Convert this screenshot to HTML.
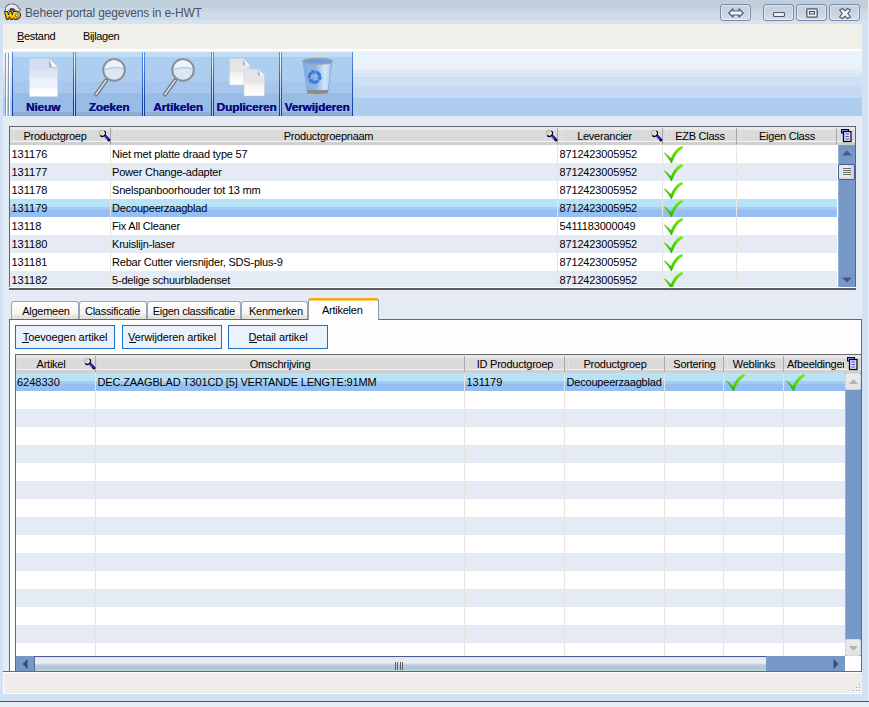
<!DOCTYPE html><html><head><meta charset="utf-8"><style>html,body{margin:0;padding:0}body{width:869px;height:707px;position:relative;overflow:hidden;background:#d3e2f2;font-family:"Liberation Sans",sans-serif}div{box-sizing:border-box}svg{position:absolute;overflow:visible}</style></head><body>
<div style="position:absolute;left:0px;top:0px;width:869px;height:24px;background:linear-gradient(#c1cedc 0,#c1cedc 8px,#c8d5e2 8px,#c8d5e2 12px,#cfdce8 12px,#cfdce8 20px,#d3e3f2 20px)"></div>
<div style="position:absolute;left:868px;top:0px;width:1px;height:707px;background:#e6edf5"></div>
<div style="position:absolute;left:0px;top:701px;width:869px;height:1px;background:#555"></div>
<div style="position:absolute;left:0px;top:702px;width:869px;height:5px;background:#e8eef7"></div>
<svg style="left:0px;top:0px" width="24" height="24" viewBox="0 0 24 24">
<defs><linearGradient id="wo" x1="0" y1="0" x2="0" y2="1"><stop offset="0" stop-color="#fff030"/><stop offset="0.6" stop-color="#f4c000"/><stop offset="1" stop-color="#e08000"/></linearGradient></defs>
<path d="M6,6 L8,5.5 L8.5,4 L10.5,4.5 L11.5,3.5 L13,4.5 L15,4 L16,5.5 L18,6 L18,8 L20.5,9 L20,11 L17,11.5 L15,9.5 L12,8.5 L9,10 L7,12 L5,11 L5.5,8.5 Z" fill="#e8eaec" stroke="#505050" stroke-width="0.8"/>
<path d="M10,8.2 Q13,7.5 15.5,10 L13.5,11.5 Q12,10.5 10,11 Z" fill="#4a4c50"/>
<path d="M4.5,11.5 L7.5,11.5 L8.5,15 L9.5,11.5 L11.5,11.5 L12.3,15 L13.2,11.5 L14,11.5 Q18,11 20.5,13.5 Q21.5,17 18.5,19 Q15,20.5 13,18.5 L12.5,19.5 L10.5,19.5 L9.5,16.8 L8.5,19.5 L6.5,19.5 Z" fill="url(#wo)" stroke="#2a2000" stroke-width="1"/>
<ellipse cx="16.8" cy="15.5" rx="1.3" ry="1.8" fill="#d8e8f4" stroke="#302800" stroke-width="0.6"/>
</svg>
<div style="position:absolute;left:25px;top:3.03px;font:normal 12px/20px 'Liberation Sans', sans-serif;color:#4a5262;letter-spacing:-0.15px;white-space:nowrap;">Beheer portal gegevens in e-HWT</div>
<div style="position:absolute;left:720px;top:4px;width:31px;height:17px;border:1px solid #7d8aa6;border-radius:3px;background:linear-gradient(#c4d0dd,#c7d3e0 50%,#d3dfeb);box-shadow:inset 0 0 0 1px rgba(255,255,255,0.45)"><svg style="left:7px;top:3px" width="16" height="10" viewBox="0 0 16 10"><path d="M0.8,5 L5,0.8 L5,3 L11,3 L11,0.8 L15.2,5 L11,9.2 L11,7 L5,7 L5,9.2 Z" fill="#f4f4f4" stroke="#4e5668" stroke-width="1.2" stroke-linejoin="round"/></svg></div>
<div style="position:absolute;left:763px;top:4px;width:31px;height:17px;border:1px solid #7d8aa6;border-radius:3px;background:linear-gradient(#c4d0dd,#c7d3e0 50%,#d3dfeb);box-shadow:inset 0 0 0 1px rgba(255,255,255,0.45)"><svg style="left:9px;top:7px" width="12" height="5" viewBox="0 0 12 5"><rect x="0.5" y="0.5" width="11" height="4" rx="1" fill="#eeeeee" stroke="#4e5668" stroke-width="1.1"/></svg></div>
<div style="position:absolute;left:796px;top:4px;width:31px;height:17px;border:1px solid #7d8aa6;border-radius:3px;background:linear-gradient(#c4d0dd,#c7d3e0 50%,#d3dfeb);box-shadow:inset 0 0 0 1px rgba(255,255,255,0.45)"><svg style="left:9px;top:3px" width="12" height="10" viewBox="0 0 12 10"><rect x="0.8" y="0.8" width="10.4" height="8.4" rx="1" fill="#eeeeee" stroke="#4e5668" stroke-width="1.3"/><rect x="3.5" y="3.5" width="5" height="2.5" fill="none" stroke="#4e5668" stroke-width="1.1"/></svg></div>
<div style="position:absolute;left:829px;top:4px;width:31px;height:17px;border:1px solid #7d8aa6;border-radius:3px;background:linear-gradient(#c4d0dd,#c7d3e0 50%,#d3dfeb);box-shadow:inset 0 0 0 1px rgba(255,255,255,0.45)"><svg style="left:9px;top:3px" width="12" height="11" viewBox="0 0 12 11"><path d="M0.6,2 L3.4,0.4 L6,2.8 L8.6,0.4 L11.4,2 L8.8,5.5 L11.4,9 L8.6,10.6 L6,8.2 L3.4,10.6 L0.6,9 L3.2,5.5 Z" fill="#f4f4f4" stroke="#4e5668" stroke-width="1.2" stroke-linejoin="round"/></svg></div>
<div style="position:absolute;left:3px;top:24px;width:859px;height:25px;background:#f0efea"></div>
<div style="position:absolute;left:3px;top:49px;width:859px;height:2px;background:#ffffff"></div>
<div style="position:absolute;left:17px;top:25.86px;font:normal 11px/20px 'Liberation Sans', sans-serif;color:#000000;letter-spacing:-0.3px;white-space:nowrap;">Bestand</div>
<div style="position:absolute;left:17px;top:41px;width:7px;height:1px;background:#000000"></div>
<div style="position:absolute;left:83px;top:25.86px;font:normal 11px/20px 'Liberation Sans', sans-serif;color:#000000;letter-spacing:-0.35px;white-space:nowrap;">Bijlagen</div>
<div style="position:absolute;left:3px;top:51px;width:859px;height:66px;background:linear-gradient(#eaf2fc 0,#eaf2fc 18px,#e3eaf3 18px,#e3eaf3 22px,#d9e7f5 22px,#d9e7f5 26px,#cfdff4 26px,#cfdff4 36px,#c5daf2 36px,#c5daf2 47px,#aecef0 47px,#aecef0 65px,#e0e8f2 65px)"></div>
<div style="position:absolute;left:5px;top:53px;width:1px;height:62px;background:#9098a8"></div>
<div style="position:absolute;left:8px;top:53px;width:1px;height:62px;background:#9098a8"></div>
<div style="position:absolute;left:6px;top:53px;width:1px;height:62px;background:#ffffff"></div>
<div style="position:absolute;left:9px;top:53px;width:1px;height:62px;background:#ffffff"></div>
<div style="position:absolute;left:12px;top:52px;width:62px;height:64px;border-left:1px solid transparent;border-right:1px solid transparent;background:linear-gradient(#c6daf2 0,#c6daf2 4px,#b6e0f6 4px,#b6e0f6 5px,#adcdf1 5px,#adcdf1 29px,#a6c6ee 29px,#a6c6ee 41px,#99bce7 41px,#99bce7 60px,#8eaed6 60px,#8eaed6 63px,#78a8dc 63px)"><svg style="left:16px;top:6px" width="30" height="40" viewBox="0 0 30 40"><defs><linearGradient id="pg" x1="0" y1="0" x2="0" y2="1"><stop offset="0" stop-color="#d2ddf0"/><stop offset="0.3" stop-color="#d6e0f2"/><stop offset="0.32" stop-color="#dee7f5"/><stop offset="0.5" stop-color="#e0e9f6"/><stop offset="0.52" stop-color="#eaf1fb"/><stop offset="0.76" stop-color="#edf3fb"/><stop offset="0.78" stop-color="#fbfcfe"/><stop offset="1" stop-color="#ffffff"/></linearGradient></defs><path d="M0.5,0.5 L20,0.5 L28.5,9 L28.5,38.5 L0.5,38.5 Z" fill="url(#pg)"/><path d="M20,0.5 L28.5,9 L20,9 Z" fill="#f6f8fa"/><path d="M20,0.5 L20,9 L23,9 Z" fill="#a8b0bc"/><path d="M20,9 L28.5,9 L28.5,10 L21,10 Z" fill="#c0c8d4"/></svg></div>
<div style="position:absolute;left:12px;top:52px;width:1px;height:64px;background:linear-gradient(#5a90e4,#3a6cd0 35%,#2458b8 60%,#0c3c9c)"></div>
<div style="position:absolute;left:73px;top:52px;width:1px;height:64px;background:linear-gradient(#5a90e4,#3a6cd0 35%,#2458b8 60%,#0c3c9c)"></div>
<div style="position:absolute;left:12px;top:96.90px;width:62px;text-align:center;font:bold 11.8px/20px 'Liberation Sans', sans-serif;color:#0c0a80;letter-spacing:-0.1px;white-space:nowrap;text-shadow:0.35px 0 0 #0c0a80">Nieuw</div>
<div style="position:absolute;left:75px;top:52px;width:68px;height:64px;border-left:1px solid transparent;border-right:1px solid transparent;background:linear-gradient(#c6daf2 0,#c6daf2 4px,#b6e0f6 4px,#b6e0f6 5px,#adcdf1 5px,#adcdf1 29px,#a6c6ee 29px,#a6c6ee 41px,#99bce7 41px,#99bce7 60px,#8eaed6 60px,#8eaed6 63px,#78a8dc 63px)"><svg style="left:18px;top:4px" width="34" height="40" viewBox="0 0 34 40"><line x1="12" y1="24.5" x2="2" y2="38.5" stroke="#6e737a" stroke-width="4" stroke-linecap="round"/><line x1="12" y1="24.5" x2="2" y2="38.5" stroke="#dcdee2" stroke-width="1.6" stroke-linecap="round"/><circle cx="20" cy="14" r="10.8" fill="#dbe8f4" stroke="#8a8e94" stroke-width="2"/><path d="M10.5,13 Q20,9 29.5,12 Q28,5 20,4 Q12,5 10.5,13 Z" fill="#eef2fa"/><path d="M10.5,13.5 Q20,10 29.5,12.5" fill="none" stroke="#9ec6de" stroke-width="1"/></svg></div>
<div style="position:absolute;left:75px;top:52px;width:1px;height:64px;background:linear-gradient(#5a90e4,#3a6cd0 35%,#2458b8 60%,#0c3c9c)"></div>
<div style="position:absolute;left:142px;top:52px;width:1px;height:64px;background:linear-gradient(#5a90e4,#3a6cd0 35%,#2458b8 60%,#0c3c9c)"></div>
<div style="position:absolute;left:75px;top:96.90px;width:68px;text-align:center;font:bold 11.8px/20px 'Liberation Sans', sans-serif;color:#0c0a80;letter-spacing:-0.1px;white-space:nowrap;text-shadow:0.35px 0 0 #0c0a80">Zoeken</div>
<div style="position:absolute;left:144px;top:52px;width:68px;height:64px;border-left:1px solid transparent;border-right:1px solid transparent;background:linear-gradient(#c6daf2 0,#c6daf2 4px,#b6e0f6 4px,#b6e0f6 5px,#adcdf1 5px,#adcdf1 29px,#a6c6ee 29px,#a6c6ee 41px,#99bce7 41px,#99bce7 60px,#8eaed6 60px,#8eaed6 63px,#78a8dc 63px)"><svg style="left:18px;top:4px" width="34" height="40" viewBox="0 0 34 40"><line x1="12" y1="24.5" x2="2" y2="38.5" stroke="#6e737a" stroke-width="4" stroke-linecap="round"/><line x1="12" y1="24.5" x2="2" y2="38.5" stroke="#dcdee2" stroke-width="1.6" stroke-linecap="round"/><circle cx="20" cy="14" r="10.8" fill="#dbe8f4" stroke="#8a8e94" stroke-width="2"/><path d="M10.5,13 Q20,9 29.5,12 Q28,5 20,4 Q12,5 10.5,13 Z" fill="#eef2fa"/><path d="M10.5,13.5 Q20,10 29.5,12.5" fill="none" stroke="#9ec6de" stroke-width="1"/></svg></div>
<div style="position:absolute;left:144px;top:52px;width:1px;height:64px;background:linear-gradient(#5a90e4,#3a6cd0 35%,#2458b8 60%,#0c3c9c)"></div>
<div style="position:absolute;left:211px;top:52px;width:1px;height:64px;background:linear-gradient(#5a90e4,#3a6cd0 35%,#2458b8 60%,#0c3c9c)"></div>
<div style="position:absolute;left:144px;top:96.90px;width:68px;text-align:center;font:bold 11.8px/20px 'Liberation Sans', sans-serif;color:#0c0a80;letter-spacing:-0.1px;white-space:nowrap;text-shadow:0.35px 0 0 #0c0a80">Artikelen</div>
<div style="position:absolute;left:213px;top:52px;width:67px;height:64px;border-left:1px solid transparent;border-right:1px solid transparent;background:linear-gradient(#c6daf2 0,#c6daf2 4px,#b6e0f6 4px,#b6e0f6 5px,#adcdf1 5px,#adcdf1 29px,#a6c6ee 29px,#a6c6ee 41px,#99bce7 41px,#99bce7 60px,#8eaed6 60px,#8eaed6 63px,#78a8dc 63px)"><svg style="left:15px;top:6px" width="40" height="40" viewBox="0 0 40 40"><defs><linearGradient id="dp" x1="0" y1="0" x2="0" y2="1"><stop offset="0" stop-color="#e2e4e8"/><stop offset="0.5" stop-color="#e6e6e6"/><stop offset="0.55" stop-color="#f2f2f0"/><stop offset="1" stop-color="#ffffff"/></linearGradient></defs><path d="M0.5,0.5 L14,0.5 L20.5,7 L20.5,27 L0.5,27 Z" fill="url(#dp)" stroke="#c8ccd2" stroke-width="0.5"/><path d="M14,0.5 L20.5,7 L14,7 Z" fill="#f8f8f8"/><path d="M14,0.5 L14,7 L16.5,7 Z" fill="#a8aeb6"/><path d="M15,11 L29,11 L35.5,17.5 L35.5,38 L15,38 Z" fill="url(#dp)" stroke="#c8ccd2" stroke-width="0.5"/><path d="M29,11 L35.5,17.5 L29,17.5 Z" fill="#f8f8f8"/><path d="M29,11 L29,17.5 L31.5,17.5 Z" fill="#a8aeb6"/></svg></div>
<div style="position:absolute;left:213px;top:52px;width:1px;height:64px;background:linear-gradient(#5a90e4,#3a6cd0 35%,#2458b8 60%,#0c3c9c)"></div>
<div style="position:absolute;left:279px;top:52px;width:1px;height:64px;background:linear-gradient(#5a90e4,#3a6cd0 35%,#2458b8 60%,#0c3c9c)"></div>
<div style="position:absolute;left:213px;top:96.90px;width:67px;text-align:center;font:bold 11.8px/20px 'Liberation Sans', sans-serif;color:#0c0a80;letter-spacing:-0.1px;white-space:nowrap;text-shadow:0.35px 0 0 #0c0a80">Dupliceren</div>
<div style="position:absolute;left:281px;top:52px;width:72px;height:64px;border-left:1px solid transparent;border-right:1px solid transparent;background:linear-gradient(#c6daf2 0,#c6daf2 4px,#b6e0f6 4px,#b6e0f6 5px,#adcdf1 5px,#adcdf1 29px,#a6c6ee 29px,#a6c6ee 41px,#99bce7 41px,#99bce7 60px,#8eaed6 60px,#8eaed6 63px,#78a8dc 63px)"><svg style="left:19px;top:5px" width="34" height="40" viewBox="0 0 34 40"><defs><linearGradient id="bn" x1="0" y1="0" x2="1" y2="0"><stop offset="0" stop-color="#82ace0"/><stop offset="0.45" stop-color="#8eb6e8"/><stop offset="0.75" stop-color="#d4e6f8"/><stop offset="0.9" stop-color="#b8d4f0"/><stop offset="1" stop-color="#7aa6dc"/></linearGradient></defs><path d="M2,4 L31,4 L27,34 L6,34 Z" fill="url(#bn)" stroke="#80a8d8" stroke-width="0.8"/><ellipse cx="16.5" cy="4.2" rx="14.6" ry="2.8" fill="#6c9edc" stroke="#9ca2a8" stroke-width="1.4"/><path d="M14.85,14.98 A5.2,5.2 0 0 1 18.68,20.45" fill="none" stroke="#3b7ad6" stroke-width="3"/><path d="M21.67,20.71 L15.69,20.19 L18.38,23.94 Z" fill="#3b7ad6"/><path d="M17.18,23.68 A5.2,5.2 0 0 1 10.52,24.26" fill="none" stroke="#3b7ad6" stroke-width="3"/><path d="M8.80,26.72 L12.24,21.80 L7.65,22.25 Z" fill="#3b7ad6"/><path d="M8.48,21.35 A5.2,5.2 0 0 1 11.30,15.29" fill="none" stroke="#3b7ad6" stroke-width="3"/><path d="M10.03,12.57 L12.57,18.01 L14.47,13.81 Z" fill="#3b7ad6"/><path d="M6,33 L27,33 L26.6,37 Q16.5,39 6.4,37 Z" fill="#8a8e94"/><path d="M6.4,37 Q16.5,39 26.6,37" fill="none" stroke="#c8ccd0" stroke-width="0.8"/></svg></div>
<div style="position:absolute;left:281px;top:52px;width:1px;height:64px;background:linear-gradient(#5a90e4,#3a6cd0 35%,#2458b8 60%,#0c3c9c)"></div>
<div style="position:absolute;left:352px;top:52px;width:1px;height:64px;background:linear-gradient(#5a90e4,#3a6cd0 35%,#2458b8 60%,#0c3c9c)"></div>
<div style="position:absolute;left:281px;top:96.90px;width:72px;text-align:center;font:bold 11.8px/20px 'Liberation Sans', sans-serif;color:#0c0a80;letter-spacing:-0.1px;white-space:nowrap;text-shadow:0.35px 0 0 #0c0a80">Verwijderen</div>
<div style="position:absolute;left:3px;top:117px;width:859px;height:554px;background:#e5ebf5"></div>
<div style="position:absolute;left:9px;top:126px;width:847px;height:164px;background:#ffffff;border:1px solid #646464;border-bottom:2px solid #5c5c5c"></div>
<div style="position:absolute;left:10px;top:127px;width:101px;height:18px;background:linear-gradient(#e9e9e9 0,#e9e9e9 3px,#dadada 3px,#dadada 14px,#f2f2f2 14px,#f2f2f2 15px,#d0d0d0 15px)"></div>
<div style="position:absolute;left:13px;top:130px;width:94px;height:12px;border-bottom:1px solid #f4f4f4;border-left:1px solid #e4e4e4;border-radius:0 0 2px 2px"></div>
<div style="position:absolute;left:110px;top:128px;width:1px;height:16px;background:#a9a9a9"></div>
<div style="position:absolute;left:111px;top:128px;width:1px;height:16px;background:#f8f8f8"></div>
<div style="position:absolute;left:18px;top:126.36px;width:74px;text-align:center;font:normal 11px/20px 'Liberation Sans', sans-serif;color:#000000;letter-spacing:-0.25px;white-space:nowrap;">Productgroep</div>
<svg style="left:98px;top:128px" width="13" height="14" viewBox="0 0 13 14"><line x1="6.6" y1="7.4" x2="11" y2="12" stroke="#000" stroke-width="2.8" stroke-linecap="round"/><line x1="6.3" y1="7.1" x2="10.4" y2="11.3" stroke="#0818ff" stroke-width="1.9" stroke-linecap="round"/><line x1="6.2" y1="8" x2="9.6" y2="11.6" stroke="#ffffff" stroke-width="0.7" stroke-dasharray="0.8 0.9"/><circle cx="4.3" cy="5.2" r="3.1" fill="#d4d4d4" stroke="#b4b4b4" stroke-width="1"/><path d="M6.5,3 A3.1,3.1 0 0 1 2.2,7.5" fill="none" stroke="#000" stroke-width="1.1"/><path d="M5.6,3.6 A2,2 0 0 1 4.3,7" fill="none" stroke="#ffffff" stroke-width="0.9"/></svg>
<div style="position:absolute;left:111px;top:127px;width:447px;height:18px;background:linear-gradient(#e9e9e9 0,#e9e9e9 3px,#dadada 3px,#dadada 14px,#f2f2f2 14px,#f2f2f2 15px,#d0d0d0 15px)"></div>
<div style="position:absolute;left:114px;top:130px;width:440px;height:12px;border-bottom:1px solid #f4f4f4;border-left:1px solid #e4e4e4;border-radius:0 0 2px 2px"></div>
<div style="position:absolute;left:557px;top:128px;width:1px;height:16px;background:#a9a9a9"></div>
<div style="position:absolute;left:558px;top:128px;width:1px;height:16px;background:#f8f8f8"></div>
<div style="position:absolute;left:111px;top:126.36px;width:435px;text-align:center;font:normal 11px/20px 'Liberation Sans', sans-serif;color:#000000;letter-spacing:-0.25px;white-space:nowrap;">Productgroepnaam</div>
<svg style="left:545px;top:128px" width="13" height="14" viewBox="0 0 13 14"><line x1="6.6" y1="7.4" x2="11" y2="12" stroke="#000" stroke-width="2.8" stroke-linecap="round"/><line x1="6.3" y1="7.1" x2="10.4" y2="11.3" stroke="#0818ff" stroke-width="1.9" stroke-linecap="round"/><line x1="6.2" y1="8" x2="9.6" y2="11.6" stroke="#ffffff" stroke-width="0.7" stroke-dasharray="0.8 0.9"/><circle cx="4.3" cy="5.2" r="3.1" fill="#d4d4d4" stroke="#b4b4b4" stroke-width="1"/><path d="M6.5,3 A3.1,3.1 0 0 1 2.2,7.5" fill="none" stroke="#000" stroke-width="1.1"/><path d="M5.6,3.6 A2,2 0 0 1 4.3,7" fill="none" stroke="#ffffff" stroke-width="0.9"/></svg>
<div style="position:absolute;left:558px;top:127px;width:105px;height:18px;background:linear-gradient(#e9e9e9 0,#e9e9e9 3px,#dadada 3px,#dadada 14px,#f2f2f2 14px,#f2f2f2 15px,#d0d0d0 15px)"></div>
<div style="position:absolute;left:561px;top:130px;width:98px;height:12px;border-bottom:1px solid #f4f4f4;border-left:1px solid #e4e4e4;border-radius:0 0 2px 2px"></div>
<div style="position:absolute;left:662px;top:128px;width:1px;height:16px;background:#a9a9a9"></div>
<div style="position:absolute;left:663px;top:128px;width:1px;height:16px;background:#f8f8f8"></div>
<div style="position:absolute;left:558px;top:126.36px;width:93px;text-align:center;font:normal 11px/20px 'Liberation Sans', sans-serif;color:#000000;letter-spacing:-0.25px;white-space:nowrap;">Leverancier</div>
<svg style="left:650px;top:128px" width="13" height="14" viewBox="0 0 13 14"><line x1="6.6" y1="7.4" x2="11" y2="12" stroke="#000" stroke-width="2.8" stroke-linecap="round"/><line x1="6.3" y1="7.1" x2="10.4" y2="11.3" stroke="#0818ff" stroke-width="1.9" stroke-linecap="round"/><line x1="6.2" y1="8" x2="9.6" y2="11.6" stroke="#ffffff" stroke-width="0.7" stroke-dasharray="0.8 0.9"/><circle cx="4.3" cy="5.2" r="3.1" fill="#d4d4d4" stroke="#b4b4b4" stroke-width="1"/><path d="M6.5,3 A3.1,3.1 0 0 1 2.2,7.5" fill="none" stroke="#000" stroke-width="1.1"/><path d="M5.6,3.6 A2,2 0 0 1 4.3,7" fill="none" stroke="#ffffff" stroke-width="0.9"/></svg>
<div style="position:absolute;left:663px;top:127px;width:74px;height:18px;background:linear-gradient(#e9e9e9 0,#e9e9e9 3px,#dadada 3px,#dadada 14px,#f2f2f2 14px,#f2f2f2 15px,#d0d0d0 15px)"></div>
<div style="position:absolute;left:666px;top:130px;width:67px;height:12px;border-bottom:1px solid #f4f4f4;border-left:1px solid #e4e4e4;border-radius:0 0 2px 2px"></div>
<div style="position:absolute;left:736px;top:128px;width:1px;height:16px;background:#a9a9a9"></div>
<div style="position:absolute;left:737px;top:128px;width:1px;height:16px;background:#f8f8f8"></div>
<div style="position:absolute;left:663px;top:126.36px;width:74px;text-align:center;font:normal 11px/20px 'Liberation Sans', sans-serif;color:#000000;letter-spacing:-0.25px;white-space:nowrap;">EZB Class</div>
<div style="position:absolute;left:737px;top:127px;width:100px;height:18px;background:linear-gradient(#e9e9e9 0,#e9e9e9 3px,#dadada 3px,#dadada 14px,#f2f2f2 14px,#f2f2f2 15px,#d0d0d0 15px)"></div>
<div style="position:absolute;left:740px;top:130px;width:93px;height:12px;border-bottom:1px solid #f4f4f4;border-left:1px solid #e4e4e4;border-radius:0 0 2px 2px"></div>
<div style="position:absolute;left:836px;top:128px;width:1px;height:16px;background:#a9a9a9"></div>
<div style="position:absolute;left:837px;top:128px;width:1px;height:16px;background:#f8f8f8"></div>
<div style="position:absolute;left:737px;top:126.36px;width:100px;text-align:center;font:normal 11px/20px 'Liberation Sans', sans-serif;color:#000000;letter-spacing:-0.25px;white-space:nowrap;">Eigen Class</div>
<div style="position:absolute;left:837px;top:127px;width:18px;height:18px;background:linear-gradient(#e9e9e9 0,#e9e9e9 3px,#dadada 3px,#dadada 14px,#f2f2f2 14px,#f2f2f2 15px,#d0d0d0 15px)"></div>
<svg style="left:841px;top:129px" width="11" height="13" viewBox="0 0 11 13"><rect x="0.5" y="0.5" width="7" height="3.5" fill="#8c90f0" stroke="#000" stroke-width="1"/><rect x="2.5" y="2.5" width="7.5" height="10" fill="#d8dcff" stroke="#000" stroke-width="1.2"/><line x1="4.5" y1="5" x2="8" y2="5" stroke="#5050d0" stroke-width="1"/><line x1="4.5" y1="7.5" x2="8" y2="7.5" stroke="#5050d0" stroke-width="1"/><line x1="4.5" y1="10" x2="8" y2="10" stroke="#5050d0" stroke-width="1"/></svg>
<div style="position:absolute;left:10px;top:145px;width:828px;height:18px;background:#ffffff"></div>
<div style="position:absolute;left:11.5px;top:144.36px;font:normal 11px/20px 'Liberation Sans', sans-serif;color:#000000;letter-spacing:0px;white-space:nowrap;">131176</div>
<div style="position:absolute;left:112px;top:144.36px;font:normal 11px/20px 'Liberation Sans', sans-serif;color:#000000;letter-spacing:-0.2px;white-space:nowrap;">Niet met platte draad type 57</div>
<div style="position:absolute;left:559.5px;top:144.36px;font:normal 11px/20px 'Liberation Sans', sans-serif;color:#000000;letter-spacing:-0.15px;white-space:nowrap;">8712423005952</div>
<div style="position:absolute;left:10px;top:163px;width:828px;height:18px;background:#e5ebf5"></div>
<div style="position:absolute;left:11.5px;top:162.36px;font:normal 11px/20px 'Liberation Sans', sans-serif;color:#000000;letter-spacing:0px;white-space:nowrap;">131177</div>
<div style="position:absolute;left:112px;top:162.36px;font:normal 11px/20px 'Liberation Sans', sans-serif;color:#000000;letter-spacing:-0.2px;white-space:nowrap;">Power Change-adapter</div>
<div style="position:absolute;left:559.5px;top:162.36px;font:normal 11px/20px 'Liberation Sans', sans-serif;color:#000000;letter-spacing:-0.15px;white-space:nowrap;">8712423005952</div>
<div style="position:absolute;left:10px;top:181px;width:828px;height:18px;background:#ffffff"></div>
<div style="position:absolute;left:11.5px;top:180.36px;font:normal 11px/20px 'Liberation Sans', sans-serif;color:#000000;letter-spacing:0px;white-space:nowrap;">131178</div>
<div style="position:absolute;left:112px;top:180.36px;font:normal 11px/20px 'Liberation Sans', sans-serif;color:#000000;letter-spacing:-0.2px;white-space:nowrap;">Snelspanboorhouder tot 13 mm</div>
<div style="position:absolute;left:559.5px;top:180.36px;font:normal 11px/20px 'Liberation Sans', sans-serif;color:#000000;letter-spacing:-0.15px;white-space:nowrap;">8712423005952</div>
<div style="position:absolute;left:10px;top:199px;width:828px;height:18px;background:linear-gradient(#b6e3f8 0,#b6e3f8 8px,#aacbf0 8px,#a4c8f0 11px,#95bff0 11px)"></div>
<div style="position:absolute;left:11.5px;top:198.36px;font:normal 11px/20px 'Liberation Sans', sans-serif;color:#000000;letter-spacing:0px;white-space:nowrap;">131179</div>
<div style="position:absolute;left:112px;top:198.36px;font:normal 11px/20px 'Liberation Sans', sans-serif;color:#000000;letter-spacing:-0.2px;white-space:nowrap;">Decoupeerzaagblad</div>
<div style="position:absolute;left:559.5px;top:198.36px;font:normal 11px/20px 'Liberation Sans', sans-serif;color:#000000;letter-spacing:-0.15px;white-space:nowrap;">8712423005952</div>
<div style="position:absolute;left:10px;top:217px;width:828px;height:18px;background:#ffffff"></div>
<div style="position:absolute;left:11.5px;top:216.36px;font:normal 11px/20px 'Liberation Sans', sans-serif;color:#000000;letter-spacing:0px;white-space:nowrap;">13118</div>
<div style="position:absolute;left:112px;top:216.36px;font:normal 11px/20px 'Liberation Sans', sans-serif;color:#000000;letter-spacing:-0.2px;white-space:nowrap;">Fix All Cleaner</div>
<div style="position:absolute;left:559.5px;top:216.36px;font:normal 11px/20px 'Liberation Sans', sans-serif;color:#000000;letter-spacing:-0.15px;white-space:nowrap;">5411183000049</div>
<div style="position:absolute;left:10px;top:235px;width:828px;height:18px;background:#e5ebf5"></div>
<div style="position:absolute;left:11.5px;top:234.36px;font:normal 11px/20px 'Liberation Sans', sans-serif;color:#000000;letter-spacing:0px;white-space:nowrap;">131180</div>
<div style="position:absolute;left:112px;top:234.36px;font:normal 11px/20px 'Liberation Sans', sans-serif;color:#000000;letter-spacing:-0.2px;white-space:nowrap;">Kruislijn-laser</div>
<div style="position:absolute;left:559.5px;top:234.36px;font:normal 11px/20px 'Liberation Sans', sans-serif;color:#000000;letter-spacing:-0.15px;white-space:nowrap;">8712423005952</div>
<div style="position:absolute;left:10px;top:253px;width:828px;height:18px;background:#ffffff"></div>
<div style="position:absolute;left:11.5px;top:252.36px;font:normal 11px/20px 'Liberation Sans', sans-serif;color:#000000;letter-spacing:0px;white-space:nowrap;">131181</div>
<div style="position:absolute;left:112px;top:252.36px;font:normal 11px/20px 'Liberation Sans', sans-serif;color:#000000;letter-spacing:-0.2px;white-space:nowrap;">Rebar Cutter viersnijder, SDS-plus-9</div>
<div style="position:absolute;left:559.5px;top:252.36px;font:normal 11px/20px 'Liberation Sans', sans-serif;color:#000000;letter-spacing:-0.15px;white-space:nowrap;">8712423005952</div>
<div style="position:absolute;left:10px;top:271px;width:828px;height:16px;background:#e5ebf5"></div>
<div style="position:absolute;left:11.5px;top:270.36px;font:normal 11px/20px 'Liberation Sans', sans-serif;color:#000000;letter-spacing:0px;white-space:nowrap;">131182</div>
<div style="position:absolute;left:112px;top:270.36px;font:normal 11px/20px 'Liberation Sans', sans-serif;color:#000000;letter-spacing:-0.2px;white-space:nowrap;">5-delige schuurbladenset</div>
<div style="position:absolute;left:559.5px;top:270.36px;font:normal 11px/20px 'Liberation Sans', sans-serif;color:#000000;letter-spacing:-0.15px;white-space:nowrap;">8712423005952</div>
<div style="position:absolute;left:110px;top:145px;width:1px;height:142px;background:#e8e4e0"></div>
<div style="position:absolute;left:557px;top:145px;width:1px;height:142px;background:#e8e4e0"></div>
<div style="position:absolute;left:662px;top:145px;width:1px;height:142px;background:#e8e4e0"></div>
<div style="position:absolute;left:736px;top:145px;width:1px;height:142px;background:#e8e4e0"></div>
<div style="position:absolute;left:837px;top:145px;width:1px;height:142px;background:#ffffff"></div>
<svg style="left:663px;top:145px" width="20" height="18" viewBox="0 0 20 18"><defs><linearGradient id="ck663_145" x1="0" y1="1" x2="0.6" y2="0"><stop offset="0" stop-color="#10a000"/><stop offset="0.45" stop-color="#48d000"/><stop offset="1" stop-color="#70ea10"/></linearGradient></defs><path d="M1,8 L1.7,7.5 Q5,10 8,13.2 C10,8 13.5,3 18.5,1 C19.5,1.2 20,2.2 20,3.3 C15.5,5.5 11.5,11 9,18 L8.2,18 Q5,12.5 1,8 Z" fill="url(#ck663_145)"/></svg>
<svg style="left:663px;top:163px" width="20" height="18" viewBox="0 0 20 18"><defs><linearGradient id="ck663_163" x1="0" y1="1" x2="0.6" y2="0"><stop offset="0" stop-color="#10a000"/><stop offset="0.45" stop-color="#48d000"/><stop offset="1" stop-color="#70ea10"/></linearGradient></defs><path d="M1,8 L1.7,7.5 Q5,10 8,13.2 C10,8 13.5,3 18.5,1 C19.5,1.2 20,2.2 20,3.3 C15.5,5.5 11.5,11 9,18 L8.2,18 Q5,12.5 1,8 Z" fill="url(#ck663_163)"/></svg>
<svg style="left:663px;top:181px" width="20" height="18" viewBox="0 0 20 18"><defs><linearGradient id="ck663_181" x1="0" y1="1" x2="0.6" y2="0"><stop offset="0" stop-color="#10a000"/><stop offset="0.45" stop-color="#48d000"/><stop offset="1" stop-color="#70ea10"/></linearGradient></defs><path d="M1,8 L1.7,7.5 Q5,10 8,13.2 C10,8 13.5,3 18.5,1 C19.5,1.2 20,2.2 20,3.3 C15.5,5.5 11.5,11 9,18 L8.2,18 Q5,12.5 1,8 Z" fill="url(#ck663_181)"/></svg>
<svg style="left:663px;top:199px" width="20" height="18" viewBox="0 0 20 18"><defs><linearGradient id="ck663_199" x1="0" y1="1" x2="0.6" y2="0"><stop offset="0" stop-color="#10a000"/><stop offset="0.45" stop-color="#48d000"/><stop offset="1" stop-color="#70ea10"/></linearGradient></defs><path d="M1,8 L1.7,7.5 Q5,10 8,13.2 C10,8 13.5,3 18.5,1 C19.5,1.2 20,2.2 20,3.3 C15.5,5.5 11.5,11 9,18 L8.2,18 Q5,12.5 1,8 Z" fill="url(#ck663_199)"/></svg>
<svg style="left:663px;top:217px" width="20" height="18" viewBox="0 0 20 18"><defs><linearGradient id="ck663_217" x1="0" y1="1" x2="0.6" y2="0"><stop offset="0" stop-color="#10a000"/><stop offset="0.45" stop-color="#48d000"/><stop offset="1" stop-color="#70ea10"/></linearGradient></defs><path d="M1,8 L1.7,7.5 Q5,10 8,13.2 C10,8 13.5,3 18.5,1 C19.5,1.2 20,2.2 20,3.3 C15.5,5.5 11.5,11 9,18 L8.2,18 Q5,12.5 1,8 Z" fill="url(#ck663_217)"/></svg>
<svg style="left:663px;top:235px" width="20" height="18" viewBox="0 0 20 18"><defs><linearGradient id="ck663_235" x1="0" y1="1" x2="0.6" y2="0"><stop offset="0" stop-color="#10a000"/><stop offset="0.45" stop-color="#48d000"/><stop offset="1" stop-color="#70ea10"/></linearGradient></defs><path d="M1,8 L1.7,7.5 Q5,10 8,13.2 C10,8 13.5,3 18.5,1 C19.5,1.2 20,2.2 20,3.3 C15.5,5.5 11.5,11 9,18 L8.2,18 Q5,12.5 1,8 Z" fill="url(#ck663_235)"/></svg>
<svg style="left:663px;top:253px" width="20" height="18" viewBox="0 0 20 18"><defs><linearGradient id="ck663_253" x1="0" y1="1" x2="0.6" y2="0"><stop offset="0" stop-color="#10a000"/><stop offset="0.45" stop-color="#48d000"/><stop offset="1" stop-color="#70ea10"/></linearGradient></defs><path d="M1,8 L1.7,7.5 Q5,10 8,13.2 C10,8 13.5,3 18.5,1 C19.5,1.2 20,2.2 20,3.3 C15.5,5.5 11.5,11 9,18 L8.2,18 Q5,12.5 1,8 Z" fill="url(#ck663_253)"/></svg>
<svg style="left:663px;top:271px" width="20" height="18" viewBox="0 0 20 18"><defs><linearGradient id="ck663_271" x1="0" y1="1" x2="0.6" y2="0"><stop offset="0" stop-color="#10a000"/><stop offset="0.45" stop-color="#48d000"/><stop offset="1" stop-color="#70ea10"/></linearGradient></defs><path d="M1,8 L1.7,7.5 Q5,10 8,13.2 C10,8 13.5,3 18.5,1 C19.5,1.2 20,2.2 20,3.3 C15.5,5.5 11.5,11 9,18 L8.2,18 Q5,12.5 1,8 Z" fill="url(#ck663_271)"/></svg>
<div style="position:absolute;left:838px;top:145px;width:17px;height:142px;background:#7598c6;border-left:1px solid #92b2d8"></div>
<svg style="left:842px;top:150px" width="10" height="6" viewBox="0 0 10 6"><path d="M0,5.5 L5,0.5 L10,5.5 Z" fill="#4a5888"/></svg>
<svg style="left:842px;top:277px" width="10" height="6" viewBox="0 0 10 6"><path d="M0,0.5 L10,0.5 L5,5.5 Z" fill="#4a5090"/></svg>
<div style="position:absolute;left:838px;top:164px;width:17px;height:16px;border:1px solid #4a5a90;border-radius:2px;background:linear-gradient(90deg,#e4e4e4,#f0f0f0 50%,#c4d0e0);box-shadow:inset 0 -2px 0 #d8dde4"></div>
<div style="position:absolute;left:843px;top:168px;width:8px;height:1px;background:#6c6c6c"></div>
<div style="position:absolute;left:843px;top:170px;width:8px;height:1px;background:#6c6c6c"></div>
<div style="position:absolute;left:843px;top:172px;width:8px;height:1px;background:#6c6c6c"></div>
<div style="position:absolute;left:843px;top:174px;width:8px;height:1px;background:#6c6c6c"></div>
<div style="position:absolute;left:9px;top:287px;width:847px;height:1px;background:#ffffff"></div>
<div style="position:absolute;left:9px;top:319px;width:853px;height:353px;background:#fdfdfe;border:1px solid #6a6a6a;border-bottom:none"></div>
<div style="position:absolute;left:11px;top:301px;width:68px;height:18px;background:linear-gradient(#ffffff 0,#fbfbf9 4px,#f4f3ef 12px,#e6e4de 14px,#e2e0da);border-left:1px solid #95a8bb;border-right:1px solid #95a8bb;border-top:1px solid #95a8bb;border-radius:3px 3px 0 0"></div>
<div style="position:absolute;left:22.3px;top:301.36px;font:normal 11px/20px 'Liberation Sans', sans-serif;color:#000000;letter-spacing:-0.28px;white-space:nowrap;">Algemeen</div>
<div style="position:absolute;left:79px;top:301px;width:68px;height:18px;background:linear-gradient(#ffffff 0,#fbfbf9 4px,#f4f3ef 12px,#e6e4de 14px,#e2e0da);border-left:1px solid #95a8bb;border-right:1px solid #95a8bb;border-top:1px solid #95a8bb;border-radius:3px 3px 0 0"></div>
<div style="position:absolute;left:85px;top:301.36px;font:normal 11px/20px 'Liberation Sans', sans-serif;color:#000000;letter-spacing:-0.28px;white-space:nowrap;">Classificatie</div>
<div style="position:absolute;left:147px;top:301px;width:94px;height:18px;background:linear-gradient(#ffffff 0,#fbfbf9 4px,#f4f3ef 12px,#e6e4de 14px,#e2e0da);border-left:1px solid #95a8bb;border-right:1px solid #95a8bb;border-top:1px solid #95a8bb;border-radius:3px 3px 0 0"></div>
<div style="position:absolute;left:152.7px;top:301.36px;font:normal 11px/20px 'Liberation Sans', sans-serif;color:#000000;letter-spacing:-0.28px;white-space:nowrap;">Eigen classificatie</div>
<div style="position:absolute;left:241px;top:301px;width:67px;height:18px;background:linear-gradient(#ffffff 0,#fbfbf9 4px,#f4f3ef 12px,#e6e4de 14px,#e2e0da);border-left:1px solid #95a8bb;border-right:1px solid #95a8bb;border-top:1px solid #95a8bb;border-radius:3px 3px 0 0"></div>
<div style="position:absolute;left:249px;top:301.36px;font:normal 11px/20px 'Liberation Sans', sans-serif;color:#000000;letter-spacing:-0.28px;white-space:nowrap;">Kenmerken</div>
<div style="position:absolute;left:308px;top:298px;width:71px;height:22px;background:#fdfdfe;border-left:1px solid #8a9aaa;border-right:1px solid #8a9aaa;border-top:2px solid #f5a623;border-radius:3px 3px 0 0;box-shadow:inset 0 1px 0 #fcc86a"></div>
<div style="position:absolute;left:322px;top:299.86px;font:normal 11px/20px 'Liberation Sans', sans-serif;color:#000000;letter-spacing:-0.25px;white-space:nowrap;">Artikelen</div>
<div style="position:absolute;left:15px;top:325px;width:100px;height:24px;border:1px solid #1a70c8;background:#eaf2fb"></div>
<div style="position:absolute;left:15px;top:327.06px;width:100px;text-align:center;font:normal 11px/20px 'Liberation Sans', sans-serif;color:#000000;letter-spacing:-0.1px;white-space:nowrap;">Toevoegen artikel</div>
<div style="position:absolute;left:22px;top:342px;width:7px;height:1px;background:#000000"></div>
<div style="position:absolute;left:122px;top:325px;width:100px;height:24px;border:1px solid #1a70c8;background:#eaf2fb"></div>
<div style="position:absolute;left:122px;top:327.06px;width:100px;text-align:center;font:normal 11px/20px 'Liberation Sans', sans-serif;color:#000000;letter-spacing:-0.1px;white-space:nowrap;">Verwijderen artikel</div>
<div style="position:absolute;left:129px;top:342px;width:7px;height:1px;background:#000000"></div>
<div style="position:absolute;left:228px;top:325px;width:100px;height:24px;border:1px solid #1a70c8;background:#eaf2fb"></div>
<div style="position:absolute;left:228px;top:327.06px;width:100px;text-align:center;font:normal 11px/20px 'Liberation Sans', sans-serif;color:#000000;letter-spacing:-0.1px;white-space:nowrap;">Detail artikel</div>
<div style="position:absolute;left:249px;top:342px;width:8px;height:1px;background:#000000"></div>
<div style="position:absolute;left:15px;top:354px;width:847px;height:318px;background:#ffffff;border:1px solid #6a6a6a;border-bottom:none"></div>
<div style="position:absolute;left:16px;top:355px;width:80px;height:18px;background:linear-gradient(#e9e9e9 0,#e9e9e9 3px,#dadada 3px,#dadada 14px,#f2f2f2 14px,#f2f2f2 15px,#d0d0d0 15px)"></div>
<div style="position:absolute;left:19px;top:358px;width:73px;height:12px;border-bottom:1px solid #f4f4f4;border-left:1px solid #e4e4e4;border-radius:0 0 2px 2px"></div>
<div style="position:absolute;left:95px;top:356px;width:1px;height:16px;background:#a9a9a9"></div>
<div style="position:absolute;left:96px;top:356px;width:1px;height:16px;background:#f8f8f8"></div>
<div style="position:absolute;left:18px;top:354.36px;width:66px;text-align:center;font:normal 11px/20px 'Liberation Sans', sans-serif;color:#000000;letter-spacing:-0.25px;white-space:nowrap;">Artikel</div>
<svg style="left:83px;top:356px" width="13" height="14" viewBox="0 0 13 14"><line x1="6.6" y1="7.4" x2="11" y2="12" stroke="#000" stroke-width="2.8" stroke-linecap="round"/><line x1="6.3" y1="7.1" x2="10.4" y2="11.3" stroke="#0818ff" stroke-width="1.9" stroke-linecap="round"/><line x1="6.2" y1="8" x2="9.6" y2="11.6" stroke="#ffffff" stroke-width="0.7" stroke-dasharray="0.8 0.9"/><circle cx="4.3" cy="5.2" r="3.1" fill="#d4d4d4" stroke="#b4b4b4" stroke-width="1"/><path d="M6.5,3 A3.1,3.1 0 0 1 2.2,7.5" fill="none" stroke="#000" stroke-width="1.1"/><path d="M5.6,3.6 A2,2 0 0 1 4.3,7" fill="none" stroke="#ffffff" stroke-width="0.9"/></svg>
<div style="position:absolute;left:96px;top:355px;width:369px;height:18px;background:linear-gradient(#e9e9e9 0,#e9e9e9 3px,#dadada 3px,#dadada 14px,#f2f2f2 14px,#f2f2f2 15px,#d0d0d0 15px)"></div>
<div style="position:absolute;left:99px;top:358px;width:362px;height:12px;border-bottom:1px solid #f4f4f4;border-left:1px solid #e4e4e4;border-radius:0 0 2px 2px"></div>
<div style="position:absolute;left:464px;top:356px;width:1px;height:16px;background:#a9a9a9"></div>
<div style="position:absolute;left:465px;top:356px;width:1px;height:16px;background:#f8f8f8"></div>
<div style="position:absolute;left:96px;top:354.36px;width:368px;text-align:center;font:normal 11px/20px 'Liberation Sans', sans-serif;color:#000000;letter-spacing:-0.25px;white-space:nowrap;">Omschrijving</div>
<div style="position:absolute;left:465px;top:355px;width:100px;height:18px;background:linear-gradient(#e9e9e9 0,#e9e9e9 3px,#dadada 3px,#dadada 14px,#f2f2f2 14px,#f2f2f2 15px,#d0d0d0 15px)"></div>
<div style="position:absolute;left:468px;top:358px;width:93px;height:12px;border-bottom:1px solid #f4f4f4;border-left:1px solid #e4e4e4;border-radius:0 0 2px 2px"></div>
<div style="position:absolute;left:564px;top:356px;width:1px;height:16px;background:#a9a9a9"></div>
<div style="position:absolute;left:565px;top:356px;width:1px;height:16px;background:#f8f8f8"></div>
<div style="position:absolute;left:465px;top:354.36px;width:100px;text-align:center;font:normal 11px/20px 'Liberation Sans', sans-serif;color:#000000;letter-spacing:-0.25px;white-space:nowrap;">ID Productgroep</div>
<div style="position:absolute;left:565px;top:355px;width:100px;height:18px;background:linear-gradient(#e9e9e9 0,#e9e9e9 3px,#dadada 3px,#dadada 14px,#f2f2f2 14px,#f2f2f2 15px,#d0d0d0 15px)"></div>
<div style="position:absolute;left:568px;top:358px;width:93px;height:12px;border-bottom:1px solid #f4f4f4;border-left:1px solid #e4e4e4;border-radius:0 0 2px 2px"></div>
<div style="position:absolute;left:664px;top:356px;width:1px;height:16px;background:#a9a9a9"></div>
<div style="position:absolute;left:665px;top:356px;width:1px;height:16px;background:#f8f8f8"></div>
<div style="position:absolute;left:565px;top:354.36px;width:100px;text-align:center;font:normal 11px/20px 'Liberation Sans', sans-serif;color:#000000;letter-spacing:-0.25px;white-space:nowrap;">Productgroep</div>
<div style="position:absolute;left:665px;top:355px;width:59px;height:18px;background:linear-gradient(#e9e9e9 0,#e9e9e9 3px,#dadada 3px,#dadada 14px,#f2f2f2 14px,#f2f2f2 15px,#d0d0d0 15px)"></div>
<div style="position:absolute;left:668px;top:358px;width:52px;height:12px;border-bottom:1px solid #f4f4f4;border-left:1px solid #e4e4e4;border-radius:0 0 2px 2px"></div>
<div style="position:absolute;left:723px;top:356px;width:1px;height:16px;background:#a9a9a9"></div>
<div style="position:absolute;left:724px;top:356px;width:1px;height:16px;background:#f8f8f8"></div>
<div style="position:absolute;left:665px;top:354.36px;width:59px;text-align:center;font:normal 11px/20px 'Liberation Sans', sans-serif;color:#000000;letter-spacing:-0.25px;white-space:nowrap;">Sortering</div>
<div style="position:absolute;left:724px;top:355px;width:60px;height:18px;background:linear-gradient(#e9e9e9 0,#e9e9e9 3px,#dadada 3px,#dadada 14px,#f2f2f2 14px,#f2f2f2 15px,#d0d0d0 15px)"></div>
<div style="position:absolute;left:727px;top:358px;width:53px;height:12px;border-bottom:1px solid #f4f4f4;border-left:1px solid #e4e4e4;border-radius:0 0 2px 2px"></div>
<div style="position:absolute;left:783px;top:356px;width:1px;height:16px;background:#a9a9a9"></div>
<div style="position:absolute;left:784px;top:356px;width:1px;height:16px;background:#f8f8f8"></div>
<div style="position:absolute;left:724px;top:354.36px;width:60px;text-align:center;font:normal 11px/20px 'Liberation Sans', sans-serif;color:#000000;letter-spacing:-0.25px;white-space:nowrap;">Weblinks</div>
<div style="position:absolute;left:784px;top:355px;width:61px;height:18px;background:linear-gradient(#e9e9e9 0,#e9e9e9 3px,#dadada 3px,#dadada 14px,#f2f2f2 14px,#f2f2f2 15px,#d0d0d0 15px)"></div>
<div style="position:absolute;left:787px;top:358px;width:58px;height:12px;border-bottom:1px solid #f4f4f4;border-left:1px solid #e4e4e4;border-radius:0 0 2px 2px"></div>
<div style="position:absolute;left:787px;top:354.36px;font:normal 11px/20px 'Liberation Sans', sans-serif;color:#000000;letter-spacing:-0.25px;white-space:nowrap;width:57px;overflow:hidden">Afbeeldingen</div>
<div style="position:absolute;left:845px;top:355px;width:16px;height:18px;background:linear-gradient(#e9e9e9 0,#e9e9e9 3px,#dadada 3px,#dadada 14px,#f2f2f2 14px,#f2f2f2 15px,#d0d0d0 15px)"></div>
<svg style="left:847px;top:357px" width="11" height="13" viewBox="0 0 11 13"><rect x="0.5" y="0.5" width="7" height="3.5" fill="#8c90f0" stroke="#000" stroke-width="1"/><rect x="2.5" y="2.5" width="7.5" height="10" fill="#d8dcff" stroke="#000" stroke-width="1.2"/><line x1="4.5" y1="5" x2="8" y2="5" stroke="#5050d0" stroke-width="1"/><line x1="4.5" y1="7.5" x2="8" y2="7.5" stroke="#5050d0" stroke-width="1"/><line x1="4.5" y1="10" x2="8" y2="10" stroke="#5050d0" stroke-width="1"/></svg>
<div style="position:absolute;left:16px;top:373px;width:829px;height:18px;background:linear-gradient(#b6e3f8 0,#b6e3f8 8px,#aacbf0 8px,#a4c8f0 11px,#95bff0 11px)"></div>
<div style="position:absolute;left:16px;top:391px;width:829px;height:18px;background:#ffffff"></div>
<div style="position:absolute;left:16px;top:409px;width:829px;height:18px;background:#e5ebf5"></div>
<div style="position:absolute;left:16px;top:427px;width:829px;height:18px;background:#ffffff"></div>
<div style="position:absolute;left:16px;top:445px;width:829px;height:18px;background:#e5ebf5"></div>
<div style="position:absolute;left:16px;top:463px;width:829px;height:18px;background:#ffffff"></div>
<div style="position:absolute;left:16px;top:481px;width:829px;height:18px;background:#e5ebf5"></div>
<div style="position:absolute;left:16px;top:499px;width:829px;height:18px;background:#ffffff"></div>
<div style="position:absolute;left:16px;top:517px;width:829px;height:18px;background:#e5ebf5"></div>
<div style="position:absolute;left:16px;top:535px;width:829px;height:18px;background:#ffffff"></div>
<div style="position:absolute;left:16px;top:553px;width:829px;height:18px;background:#e5ebf5"></div>
<div style="position:absolute;left:16px;top:571px;width:829px;height:18px;background:#ffffff"></div>
<div style="position:absolute;left:16px;top:589px;width:829px;height:18px;background:#e5ebf5"></div>
<div style="position:absolute;left:16px;top:607px;width:829px;height:18px;background:#ffffff"></div>
<div style="position:absolute;left:16px;top:625px;width:829px;height:18px;background:#e5ebf5"></div>
<div style="position:absolute;left:16px;top:643px;width:829px;height:13px;background:#ffffff"></div>
<div style="position:absolute;left:17px;top:372.36px;font:normal 11px/20px 'Liberation Sans', sans-serif;color:#000000;letter-spacing:0px;white-space:nowrap;">6248330</div>
<div style="position:absolute;left:97.6px;top:372.36px;font:normal 11px/20px 'Liberation Sans', sans-serif;color:#000000;letter-spacing:-0.18px;white-space:nowrap;">DEC.ZAAGBLAD T301CD [5] VERTANDE LENGTE:91MM</div>
<div style="position:absolute;left:466.4px;top:372.36px;font:normal 11px/20px 'Liberation Sans', sans-serif;color:#000000;letter-spacing:0px;white-space:nowrap;">131179</div>
<div style="position:absolute;left:566.5px;top:372.36px;font:normal 11px/20px 'Liberation Sans', sans-serif;color:#000000;letter-spacing:-0.2px;white-space:nowrap;">Decoupeerzaagblad</div>
<svg style="left:725px;top:373px" width="20" height="18" viewBox="0 0 20 18"><defs><linearGradient id="ck725_373" x1="0" y1="1" x2="0.6" y2="0"><stop offset="0" stop-color="#10a000"/><stop offset="0.45" stop-color="#48d000"/><stop offset="1" stop-color="#70ea10"/></linearGradient></defs><path d="M1,8 L1.7,7.5 Q5,10 8,13.2 C10,8 13.5,3 18.5,1 C19.5,1.2 20,2.2 20,3.3 C15.5,5.5 11.5,11 9,18 L8.2,18 Q5,12.5 1,8 Z" fill="url(#ck725_373)"/></svg>
<svg style="left:785px;top:373px" width="20" height="18" viewBox="0 0 20 18"><defs><linearGradient id="ck785_373" x1="0" y1="1" x2="0.6" y2="0"><stop offset="0" stop-color="#10a000"/><stop offset="0.45" stop-color="#48d000"/><stop offset="1" stop-color="#70ea10"/></linearGradient></defs><path d="M1,8 L1.7,7.5 Q5,10 8,13.2 C10,8 13.5,3 18.5,1 C19.5,1.2 20,2.2 20,3.3 C15.5,5.5 11.5,11 9,18 L8.2,18 Q5,12.5 1,8 Z" fill="url(#ck785_373)"/></svg>
<div style="position:absolute;left:95px;top:373px;width:1px;height:283px;background:#e8e4e0"></div>
<div style="position:absolute;left:464px;top:373px;width:1px;height:283px;background:#e8e4e0"></div>
<div style="position:absolute;left:564px;top:373px;width:1px;height:283px;background:#e8e4e0"></div>
<div style="position:absolute;left:664px;top:373px;width:1px;height:283px;background:#e8e4e0"></div>
<div style="position:absolute;left:723px;top:373px;width:1px;height:283px;background:#e8e4e0"></div>
<div style="position:absolute;left:783px;top:373px;width:1px;height:283px;background:#e8e4e0"></div>
<div style="position:absolute;left:845px;top:373px;width:16px;height:283px;background:#7598c6;border-left:1px solid #92b2d8"></div>
<div style="position:absolute;left:845px;top:373px;width:16px;height:17px;background:linear-gradient(#ececec,#e2e2e2);border:1px solid #d8d8d8;border-radius:2px"><svg style="left:3px;top:5px" width="9" height="5" viewBox="0 0 9 5"><path d="M0,5 L4.5,0 L9,5 Z" fill="#b4b4b4"/></svg></div>
<div style="position:absolute;left:845px;top:639px;width:16px;height:17px;background:linear-gradient(#ececec,#e2e2e2);border:1px solid #d8d8d8;border-radius:2px"><svg style="left:3px;top:6px" width="9" height="5" viewBox="0 0 9 5"><path d="M0,0 L9,0 L4.5,5 Z" fill="#b4b4b4"/></svg></div>
<div style="position:absolute;left:16px;top:656px;width:829px;height:15px;background:#7598c6"></div>
<svg style="left:22px;top:659px" width="6" height="10" viewBox="0 0 6 10"><path d="M5.5,0 L5.5,10 L0.5,5 Z" fill="#3c4a78"/></svg>
<svg style="left:833px;top:659px" width="6" height="10" viewBox="0 0 6 10"><path d="M0.5,0 L0.5,10 L5.5,5 Z" fill="#3c4a78"/></svg>
<div style="position:absolute;left:34px;top:656px;width:732px;height:15px;border-top:1px solid #4a5a98;border-left:1px solid #5a6aa0;background:linear-gradient(#e6e6e6 0,#e6e6e6 2px,#e6ecf6 2px,#e6ecf6 6px,#c0cede 8px,#b4c4d8 10px,#a8ccd8 12px,#c8d4e0 14px)"></div>
<div style="position:absolute;left:395px;top:662px;width:1px;height:8px;background:#606060"></div>
<div style="position:absolute;left:397px;top:662px;width:1px;height:8px;background:#606060"></div>
<div style="position:absolute;left:400px;top:662px;width:1px;height:8px;background:#606060"></div>
<div style="position:absolute;left:402px;top:662px;width:1px;height:8px;background:#606060"></div>
<div style="position:absolute;left:845px;top:656px;width:16px;height:15px;background:#ffffff"></div>
<div style="position:absolute;left:15px;top:671px;width:847px;height:1px;background:#6a6a6a"></div>
<div style="position:absolute;left:3px;top:671px;width:859px;height:1px;background:#6a6a6a"></div>
<div style="position:absolute;left:3px;top:672px;width:859px;height:22px;background:#f0ecec;border-top:1px solid #fff;border-left:1px solid #fff;border-bottom:1px solid #fff"></div>
<div style="position:absolute;left:859px;top:690px;width:1px;height:1px;background:#a0a0a0"></div>
<div style="position:absolute;left:860px;top:691px;width:1px;height:1px;background:#ffffff"></div>
<div style="position:absolute;left:859px;top:687px;width:1px;height:1px;background:#a0a0a0"></div>
<div style="position:absolute;left:860px;top:688px;width:1px;height:1px;background:#ffffff"></div>
<div style="position:absolute;left:859px;top:684px;width:1px;height:1px;background:#a0a0a0"></div>
<div style="position:absolute;left:860px;top:685px;width:1px;height:1px;background:#ffffff"></div>
<div style="position:absolute;left:856px;top:690px;width:1px;height:1px;background:#a0a0a0"></div>
<div style="position:absolute;left:857px;top:691px;width:1px;height:1px;background:#ffffff"></div>
<div style="position:absolute;left:856px;top:687px;width:1px;height:1px;background:#a0a0a0"></div>
<div style="position:absolute;left:857px;top:688px;width:1px;height:1px;background:#ffffff"></div>
<div style="position:absolute;left:853px;top:690px;width:1px;height:1px;background:#a0a0a0"></div>
<div style="position:absolute;left:854px;top:691px;width:1px;height:1px;background:#ffffff"></div>
</body></html>
